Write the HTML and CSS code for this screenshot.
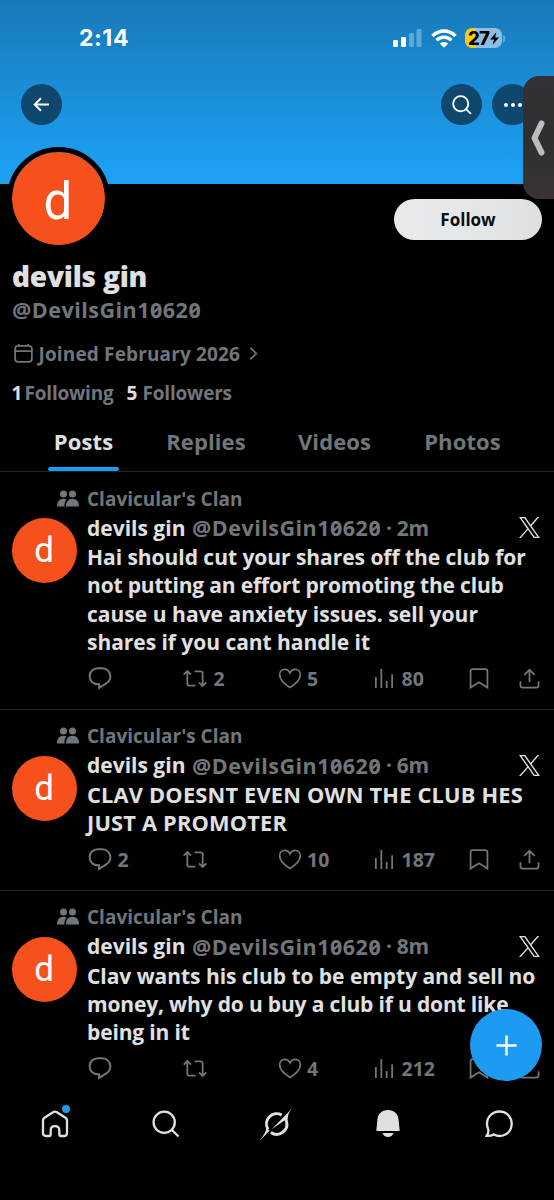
FILE: index.html
```html
<!DOCTYPE html>
<html lang="en">
<head>
<meta charset="utf-8">
<title>devils gin (@DevilsGin10620)</title>
<link rel="stylesheet" href="styles.css">
</head>
<body>
<svg class="defs" aria-hidden="true">
  <symbol id="people" viewBox="0 0 22 18"><circle cx="6.500" cy="4" r="3.500"/><circle cx="15.500" cy="4" r="3.500"/><path d="M9.500 9.400C8 11 7.500 13 7.400 16.400H0C0 11.500 2.700 8.800 6.500 8.800c1.200 0 2.200.2 3 .6z"/><path d="M9 16.400c0-4.900 2.500-7.600 6.500-7.600s6.500 2.700 6.500 7.600z"/></symbol>
  <symbol id="reply" viewBox="1 1 22 21.500"><path d="M10 2.200h4.200c4.300 0 7.500 3.300 7.500 7.400 0 3-1.600 5.300-4.200 6.900l-6.300 4v-3.300H10c-4.400 0-7.700-3.400-7.700-7.600S5.600 2.200 10 2.200z"/></symbol>
  <symbol id="repost" viewBox="0 0 26 24"><path d="M1.200 8 5 4.200 8.800 8M5 4.800V17.500c0 1.200.8 2 2 2h6.500M24.800 16 21 19.800 17.200 16M21 19.200V6.500c0-1.200-.8-2-2-2h-6.500"/></symbol>
  <symbol id="heart" viewBox="0 0 24 24"><path d="M12 21.300C6.500 18 1.200 13.500 1.200 8.200c0-3.500 2.500-5.700 5.300-5.700 2.300 0 4.300 1.300 5.500 3.700 1.200-2.400 3.200-3.700 5.500-3.700 2.800 0 5.300 2.200 5.300 5.700 0 5.300-5.300 9.800-10.800 13.100z"/></symbol>
  <symbol id="views" viewBox="0 0 20 24"><path d="M1.500 22V10.500M7.200 22V2M12.800 22v-7.500M18.500 22V7.500"/></symbol>
  <symbol id="bookmark" viewBox="0 0 20 24"><path d="M1.200 21.500V4.500c0-1.400.9-2.300 2.300-2.300h13c1.400 0 2.300.9 2.300 2.300v17L10 16z"/></symbol>
  <symbol id="share" viewBox="0 0 22 24"><path d="M11 16V3M5.600 8.300 11 2.900l5.400 5.400M1.500 15v4c0 1.500 1 2.500 2.500 2.500h14c1.500 0 2.500-1 2.500-2.500v-4"/></symbol>
  <symbol id="xlogo" viewBox="0 0 24 24"><path fill="#e0e0e0" d="M14.270 10.160 23.180 0h-2.110l-7.740 8.820L7.150 0H0l9.350 13.340L0 24h2.110l8.180-9.320L16.820 24h7.150zm-2.900 3.300-.95-1.330L2.880 1.560h3.240l6.090 8.520.94 1.330 7.910 11.080h-3.240z"/></symbol>
  <symbol id="search" viewBox="0 0 28 28"><circle cx="12.200" cy="12.200" r="10.600"/><path d="m19.700 19.700 6.800 6.800"/></symbol>
</svg>
<div class="screen">
  <header class="cover">
    <div class="status">
      <time class="clock">2:14</time>
      <svg class="signal" viewBox="0 0 29 18"><rect y="11" width="5" height="7" rx="1.300"/><rect x="8" y="8" width="5" height="10" rx="1.300"/><g opacity=".3"><rect x="16" y="4" width="5" height="14" rx="1.300"/><rect x="23.500" width="5" height="18" rx="1.300"/></g></svg>
      <svg class="wifi" viewBox="0 0 26 19"><path d="M1.500 7C8 .3 18 .3 24.500 7M5.600 11.300c4.300-4.200 10.500-4.200 14.800 0"/><path class="solid" d="m8.800 14.600 4.200 4.100 4.200-4.100c-2.300-2.200-6.100-2.200-8.400 0z"/></svg>
      <div class="battery"><span>27</span><svg viewBox="0 0 10 14"><path d="M7 0 0 8h4.300L3 14l7-8H5.700z"/></svg></div>
    </div>
    <nav class="toolbar">
      <button class="round" aria-label="Back"><svg class="back" viewBox="0 0 18 16"><path d="M17 8H2M8.400 1.300 1.700 8l6.700 6.700"/></svg></button>
      <button class="round push" aria-label="Search"><svg class="find"><use href="#search"/></svg></button>
      <button class="round" aria-label="More"><svg class="more" viewBox="0 0 18 4"><circle cx="2" cy="2" r="2"/><circle cx="9" cy="2" r="2"/><circle cx="16" cy="2" r="2"/></svg></button>
    </nav>
  </header>
  <section class="profile">
    <div class="lead"><div class="avatar large">d</div><button class="follow">Follow</button></div>
    <h1>devils gin</h1>
    <p class="handle">@DevilsGin10620</p>
    <p class="joined"><svg class="cal" viewBox="0 0 20 20"><path d="M1.200 5v10.500c0 2 1.300 3.300 3.300 3.300h11c2 0 3.300-1.300 3.300-3.300V5c0-1.800-1.200-3-3-3H4.200c-1.800 0-3 1.200-3 3zM1.200 7.500h17.600M5 0v3M15 0v3"/></svg><span>Joined February 2026</span><svg class="chev" viewBox="0 0 10 16"><path d="m1.500 1.500 6.500 6.500-6.500 6.500"/></svg></p>
    <p class="counts"><b>1</b><span>Following</span><b class="second">5</b><span>Followers</span></p>
  </section>
  <nav class="tabs"><a class="on">Posts</a><a>Replies</a><a>Videos</a><a>Photos</a></nav>
  <main>
    <article class="post">
      <div class="avatar">d</div>
      <div class="content">
        <div class="context"><svg class="people"><use href="#people"/></svg><span>Clavicular's Clan</span></div>
        <div class="by"><b>devils gin</b><span class="at">@DevilsGin10620</span><span class="age">· 2m</span><svg class="x"><use href="#xlogo"/></svg></div>
        <p class="text">Hai should cut your shares off the club for<br><span class="tight">not putting an effort promoting the club</span><br><span class="loose">cause u have anxiety issues. sell your</span><br>shares if you cant handle it</p>
        <div class="actions"><span><svg class="reply"><use href="#reply"/></svg></span><span><svg class="repost"><use href="#repost"/></svg>2</span><span><svg class="heart"><use href="#heart"/></svg>5</span><span><svg class="views"><use href="#views"/></svg>80</span><span><svg class="bookmark"><use href="#bookmark"/></svg></span><span><svg class="share"><use href="#share"/></svg></span></div>
      </div>
    </article>
    <article class="post">
      <div class="avatar">d</div>
      <div class="content">
        <div class="context"><svg class="people"><use href="#people"/></svg><span>Clavicular's Clan</span></div>
        <div class="by"><b>devils gin</b><span class="at">@DevilsGin10620</span><span class="age">· 6m</span><svg class="x"><use href="#xlogo"/></svg></div>
        <p class="text caps">CLAV DOESNT EVEN OWN THE CLUB HES<br>JUST A PROMOTER</p>
        <div class="actions"><span><svg class="reply"><use href="#reply"/></svg>2</span><span><svg class="repost"><use href="#repost"/></svg></span><span><svg class="heart"><use href="#heart"/></svg>10</span><span><svg class="views"><use href="#views"/></svg>187</span><span><svg class="bookmark"><use href="#bookmark"/></svg></span><span><svg class="share"><use href="#share"/></svg></span></div>
      </div>
    </article>
    <article class="post">
      <div class="avatar">d</div>
      <div class="content">
        <div class="context"><svg class="people"><use href="#people"/></svg><span>Clavicular's Clan</span></div>
        <div class="by"><b>devils gin</b><span class="at">@DevilsGin10620</span><span class="age">· 8m</span><svg class="x"><use href="#xlogo"/></svg></div>
        <p class="text">Clav wants his club to be empty and sell no<br><span class="tight">money, why do u buy a club if u dont like</span><br><span class="tight">being in it</span></p>
        <div class="actions"><span><svg class="reply"><use href="#reply"/></svg></span><span><svg class="repost"><use href="#repost"/></svg></span><span><svg class="heart"><use href="#heart"/></svg>4</span><span><svg class="views"><use href="#views"/></svg>212</span><span><svg class="bookmark"><use href="#bookmark"/></svg></span><span><svg class="share"><use href="#share"/></svg></span></div>
      </div>
    </article>
  </main>
  <button class="compose" aria-label="New post"><svg viewBox="0 0 22 22"><path d="M11 .5v21M.5 11h21"/></svg></button>
  <nav class="bottom">
    <a><svg class="nav-icon" viewBox="0 0 28 28"><path d="M2 10.500c0-1.200.5-2 1.500-2.700L12 2.300c1.300-.9 2.700-.9 4 0l8.500 5.500c1 .7 1.500 1.500 1.500 2.700V23c0 2-1 3-3 3h-3.500c-.8 0-1.200-.4-1.200-1.200v-4.300c0-2.600-1.700-4.300-4.300-4.300s-4.300 1.700-4.300 4.300v4.300c0 .8-.4 1.200-1.200 1.200H5c-2 0-3-1-3-3z"/></svg><i class="dot"></i></a>
    <a><svg class="nav-icon"><use href="#search"/></svg></a>
    <a><svg class="grok" viewBox="0 0 34 34"><path class="ring" d="M22.300 7.200A10.500 10.500 0 0 0 8.200 21.800M27.200 13.500A10.500 10.500 0 0 1 11.200 25.200"/><path d="M33 .5 12 22l13.200-9.200c1.300 1.200 1.700 2.200 1.500 4l2-1.500c-.5-5-.2-9.300 4.300-14.800zM6.600 19.800 9.800 23.500 0 33.500c3.500-5 6.300-8.800 6.600-13.700z"/></svg></a>
    <a><svg class="bell" viewBox="0 0 24 28"><path d="M12 0C6 0 1.800 4 1.400 9.500L.3 21h23.400L22.600 9.500C22.200 4 18 0 12 0zM6.500 23c.8 2.800 2.800 4 5.500 4s4.700-1.200 5.500-4z"/></svg></a>
    <a><svg class="nav-icon" viewBox="0 0 28 28"><path d="M14.500 1.500c7 0 12.200 5.300 12.200 12.300S21.500 26 14.500 26c-2.400 0-4-.6-5.700-1.600-1.500.9-3.800 1.700-7.300 1.500 2-2.500 2.400-4.900 1.500-7.300-.7-1.500-1-3.200-1-4.800 0-7 5.500-12.300 12.500-12.300z"/></svg></a>
  </nav>
  <div class="side-tab"><svg viewBox="0 0 14 36"><path d="m10.500 3.500-7 14.500 7 14.500"/></svg></div>
</div>
</body>
</html>
```
FILE: styles.css
```css
* { box-sizing: border-box; }
body { margin: 0; background: #000; }
h1, p { margin: 0; font-weight: 700; }
b { font-weight: 700; }
button { border: 0; padding: 0; font: inherit; }
.defs { position: absolute; width: 0; height: 0; }
svg { flex: none; fill: none; stroke: currentColor; stroke-width: 1.850; }
.screen {
  position: relative;
  width: 554px;
  height: 1200px;
  overflow: hidden;
  background: #000;
  color: #e0e0e1;
  font-family: "Open Sans", "Noto Sans", sans-serif;
  font-weight: 700;
  white-space: nowrap;
}

.cover { height: 184px; background: linear-gradient(#1879b8, #1d9ff2 92%); }
.status { display: flex; align-items: center; height: 76px; padding-left: 79px; color: #fff; }
.clock { width: 314px; font: 700 23px Inter, sans-serif; letter-spacing: .6px; }
.signal { width: 29px; height: 18px; fill: #fff; stroke: none; }
.wifi { width: 26px; height: 19px; margin-left: 9px; stroke-width: 3.400; }
.wifi .solid { fill: #fff; stroke: none; }
.battery {
  position: relative;
  display: flex;
  align-items: center;
  justify-content: center;
  gap: 1px;
  width: 37px;
  height: 20px;
  margin-left: 8px;
  border-radius: 7px;
  background: linear-gradient(90deg, #fccb0a 30%, #8dbfe3 30%);
  color: #000;
  font: 800 18.500px Inter, sans-serif;
  letter-spacing: -.8px;
}
.battery svg { width: 9px; height: 13px; fill: #000; stroke: none; }
.battery::after { content: ""; position: absolute; right: -3px; top: 7px; width: 2px; height: 7px; border-radius: 0 2px 2px 0; background: #65abd9; }
.toolbar { display: flex; gap: 10px; padding: 8px 21px; }
.round { display: flex; align-items: center; justify-content: center; width: 41px; height: 41px; border-radius: 50%; background: #10476d; color: #fff; }
.push { margin-left: auto; }
.back { width: 17px; height: 15px; stroke-width: 2; }
.find { width: 20px; height: 20px; stroke-width: 2.600; }
.more { width: 18px; height: 4px; fill: #fff; stroke: none; }

.profile { height: 227px; padding: 0 12px; color: #71767b; }
.lead { display: flex; justify-content: space-between; height: 74px; }
.avatar { display: flex; align-items: center; justify-content: center; width: 65px; height: 65px; border-radius: 50%; background: #f6511d; color: #fff; font: 400 35px Roboto, sans-serif; }
.large { width: 103px; height: 103px; margin: -37px 0 0 -5.500px; border: 5px solid #000; background-clip: padding-box; font-size: 51px; line-height: 1; padding-top: 5px; }
.follow { width: 148px; height: 41px; margin: 15px 0 0; border-radius: 21px; background: linear-gradient(90deg, #e8ebec, #e2e6e7 65%, #dce0e1); color: #0b0d0f; font-size: 17px; }
h1 { height: 36px; color: #e0e0e1; font-size: 28px; font-weight: 800; line-height: 36px; letter-spacing: -.2px; }
.handle { height: 32px; font-size: 21.500px; line-height: 32px; letter-spacing: .5px; font-feature-settings: "zero"; }
.joined { display: flex; align-items: center; height: 55px; font-size: 19px; letter-spacing: .15px; }
.cal { width: 19px; height: 19px; margin: 0 6px 0 1.500px; }
.chev { width: 9px; height: 15px; margin-left: 9px; }
.counts { display: flex; height: 24px; align-items: center; font-size: 19px; letter-spacing: -.2px; }
.counts b { width: 13px; margin-left: -.5px; color: #e0e0e1; }
.counts .second { margin-left: 13px; width: 16px; }
.tabs { display: flex; height: 61px; padding: 3px 24px 0; border-bottom: 1px solid #202224; color: #71767b; font-size: 22px; line-height: 55px; letter-spacing: .1px; }
.tabs a { position: relative; width: 119px; text-align: center; }
.tabs a:nth-child(2) { width: 126px; }
.tabs a:nth-child(3) { width: 131px; }
.tabs a:nth-child(4) { width: 125px; }
.tabs .on { color: #e0e0e1; }
.on::after { content: ""; position: absolute; left: 24px; bottom: 0; width: 71px; height: 4px; border-radius: 2px; background: #1d9bf0; }

.post { display: grid; grid-template-columns: 65px 1fr; column-gap: 10px; padding: 13.500px 14px 8.400px 12px; border-bottom: 1px solid #202224; }
.post > .avatar { margin-top: 32.900px; margin-left: -.5px; }
.context { display: flex; gap: 8px; align-items: center; height: 26px; margin-left: -30px; color: #71767b; font-size: 19px; }
.people { width: 22px; height: 18px; fill: currentColor; stroke: none; }
.by { display: flex; align-items: center; height: 32px; font-size: 21px; letter-spacing: 0; }
.by b { width: 105px; }
.at { width: 194px; color: #71767b; font-size: 21.500px; letter-spacing: .5px; font-feature-settings: "zero"; }
.age { color: #71767b; letter-spacing: -.3px; }
.x { width: 21px; height: 21px; margin-left: auto; stroke: none; }
.text { margin-top: -.6px; font-size: 21px; line-height: 28.350px; letter-spacing: -.04px; }
.tight { letter-spacing: -.16px; }
.loose { letter-spacing: .03px; }
.caps { font-size: 21.800px; letter-spacing: .19px; }
.actions { display: grid; grid-template-columns: 94px 96px 96px 95px 50px 21px; align-items: center; height: 44px; margin-left: .5px; color: #71767b; font-size: 19.500px; letter-spacing: 0; }
.actions span { display: flex; align-items: center; gap: 6px; }
.actions svg { height: 23px; }
.reply, .heart { width: 24px; }
.repost { width: 26px; }
.views { width: 20px; margin-right: 2px; }
.heart { margin-right: -.5px; }
.bookmark { width: 20px; }
.share { width: 21px; }

.bottom { position: absolute; left: 0; right: 0; bottom: 0; display: grid; grid-template-columns: repeat(5, 1fr); height: 114px; padding-top: 24px; background: #000; }
.bottom a { position: relative; display: flex; align-items: center; justify-content: center; height: 28px; }
.nav-icon { width: 28px; height: 28px; stroke-width: 2.300; }
.grok { width: 33px; height: 33px; fill: currentColor; stroke: none; }
.grok .ring { fill: none; stroke: currentColor; stroke-width: 3; }
.bell { width: 24px; height: 28px; fill: currentColor; stroke: none; }
.dot { position: absolute; left: 62px; top: -5px; width: 8px; height: 8px; border-radius: 50%; background: #1d9bf0; }
.compose { position: absolute; left: 470px; top: 1009px; display: flex; align-items: center; justify-content: center; width: 72px; height: 72px; border-radius: 50%; background: #1d9bf0; color: #fff; }
.compose svg { width: 21px; height: 21px; stroke-width: 2.500; }
.side-tab { position: absolute; right: 0; top: 76px; display: flex; align-items: center; padding-left: 8px; width: 31px; height: 123px; border-radius: 16px 0 0 16px; background: linear-gradient(#343138, #302e31 50%, #3a3433); color: #bdbac2; }
.side-tab svg { width: 14px; height: 36px; stroke-width: 6; stroke-linecap: round; stroke-linejoin: round; }
```
